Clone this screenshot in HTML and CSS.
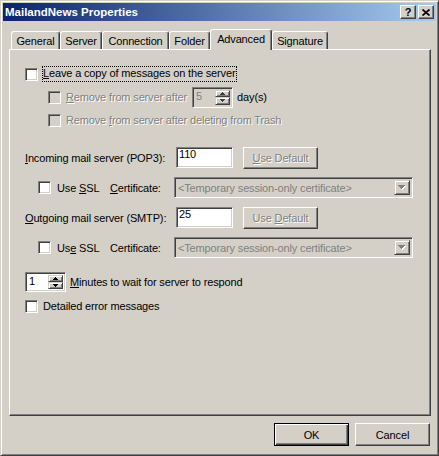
FILE: index.html
```html
<!DOCTYPE html>
<html lang="en">
<head>
    <meta charset="UTF-8">
    <title>MailandNews Properties</title>
    <link rel="stylesheet" href="styles.css">
</head>
<body>
<div class="window">
    <div class="titlebar">
        <span class="title">MailandNews Properties</span>
        <div class="caption">
            <span class="cap-btn">?</span>
            <span class="cap-btn"><svg width="8" height="7"><path d="M0.5 0.5L7.5 6.5M7.5 0.5L0.5 6.5" stroke="#000" stroke-width="1.7"/></svg></span>
        </div>
    </div>
    <div class="body">
        <div class="tabs">
            <div class="tab t-general">General</div>
            <div class="tab t-server">Server</div>
            <div class="tab t-connection">Connection</div>
            <div class="tab t-folder">Folder</div>
            <div class="tab t-advanced active">Advanced</div>
            <div class="tab t-signature">Signature</div>
        </div>
        <div class="panel">
            <div class="row r-leave">
                <span class="check"></span>
                <span class="focus"><u>L</u>eave a copy of messages on the server</span>
            </div>
            <div class="row r-sub">
                <span class="check off"></span>
                <span class="lbl dis"><u>R</u>emove from server after</span>
                <div class="spin off">
                    <span class="spin-val dis-plain">5</span>
                    <div class="spin-btns">
                        <span><svg width="5" height="3"><path d="M2 0h1v1H2zM1 1h3v1H1zM0 2h5v1H0z" fill="#404040"/></svg></span>
                        <span><svg width="5" height="3"><path d="M0 0h5v1H0zM1 1h3v1H1zM2 2h1v1H2z" fill="#404040"/></svg></span>
                    </div>
                </div>
                <span class="days">day(s)</span>
            </div>
            <div class="row r-sub2">
                <span class="check off"></span>
                <span class="lbl dis">Remove <u>f</u>rom server after deleting from Trash</span>
            </div>

            <div class="row r-server">
                <span class="w-server"><u>I</u>ncoming mail server (POP3):</span>
                <span class="field">110</span>
                <span class="btn small dis"><span><u>U</u>se Default</span></span>
            </div>
            <div class="row r-ssl">
                <span class="check"></span>
                <span class="lbl w-ssl">Use <u>S</u>SL</span>
                <span class="w-cert"><u>C</u>ertificate:</span>
                <div class="combo">
                    <span class="combo-val">&lt;Temporary session-only certificate&gt;</span>
                    <span class="combo-btn"><svg width="8" height="5"><path d="M1 1h7v1H1zM2 2h5v1H2zM3 3h3v1H3zM4 4h1v1H4z" fill="#fff"/><path d="M0 0h7v1H0zM1 1h5v1H1zM2 2h3v1H2zM3 3h1v1H3z" fill="#808080"/></svg></span>
                </div>
            </div>

            <div class="row r-server">
                <span class="w-server"><u>O</u>utgoing mail server (SMTP):</span>
                <span class="field">25</span>
                <span class="btn small dis"><span>Use <u>D</u>efault</span></span>
            </div>
            <div class="row r-ssl">
                <span class="check"></span>
                <span class="lbl w-ssl">Us<u>e</u> SSL</span>
                <span class="w-cert">Certificate:</span>
                <div class="combo">
                    <span class="combo-val">&lt;Temporary session-only certificate&gt;</span>
                    <span class="combo-btn"><svg width="8" height="5"><path d="M1 1h7v1H1zM2 2h5v1H2zM3 3h3v1H3zM4 4h1v1H4z" fill="#fff"/><path d="M0 0h7v1H0zM1 1h5v1H1zM2 2h3v1H2zM3 3h1v1H3z" fill="#808080"/></svg></span>
                </div>
            </div>

            <div class="row r-wait">
                <div class="spin">
                    <span class="spin-val">1</span>
                    <div class="spin-btns">
                        <span><svg width="5" height="3"><path d="M2 0h1v1H2zM1 1h3v1H1zM0 2h5v1H0z" fill="#000"/></svg></span>
                        <span><svg width="5" height="3"><path d="M0 0h5v1H0zM1 1h3v1H1zM2 2h1v1H2z" fill="#000"/></svg></span>
                    </div>
                </div>
                <span class="minutes"><u>M</u>inutes to wait for server to respond</span>
            </div>
            <div class="row r-detail">
                <span class="check"></span>
                <span class="lbl">Detailed error messages</span>
            </div>
        </div>
        <div class="actions">
            <span class="btn default"><span>OK</span></span>
            <span class="btn"><span>Cancel</span></span>
        </div>
    </div>
</div>
</body>
</html>
```

FILE: styles.css
```css
*{
    margin: 0;
    padding: 0;
    box-sizing: border-box;
}
body{
    font: 11px "Liberation Sans", Arial, sans-serif;
    letter-spacing: -0.15px;
    color: #000000;
    background-color: #d4d0c8;
}
.window{
    width: 439px;
    height: 456px;
    display: flex;
    flex-direction: column;
    padding: 2px;
    background-color: #d4d0c8;
    border: 1px solid;
    border-color: #d4d0c8 #404040 #404040 #d4d0c8;
    box-shadow: inset 1px 1px #ffffff, inset -1px -1px #808080;
}
.titlebar{
    height: 18px;
    display: flex;
    align-items: center;
    justify-content: space-between;
    padding: 0 2px;
    background: linear-gradient(to right, #0a246a, #a6caf0);
    color: #ffffff;
    font-weight: bold;
    letter-spacing: 0;
}
.title{
    font-size: 11.5px;
}
.caption{
    display: flex;
    gap: 2px;
}
.cap-btn{
    width: 16px;
    height: 14px;
    display: flex;
    align-items: center;
    justify-content: center;
    color: #000000;
    background-color: #d4d0c8;
    border: 1px solid;
    border-color: #ffffff #404040 #404040 #ffffff;
    box-shadow: inset -1px -1px #808080;
}
.body{
    flex: 1;
    display: flex;
    flex-direction: column;
    padding: 8px 5px 0 6px;
}
/* tabs */
.tabs{
    height: 20px;
    display: flex;
    align-items: flex-start;
    padding-left: 2px;
}
.tab{
    height: 18px;
    margin-top: 2px;
    padding-top: 1px;
    display: flex;
    align-items: center;
    justify-content: center;
    border: 1px solid;
    border-bottom: none;
    border-color: #ffffff #404040 transparent #ffffff;
    border-radius: 3px 3px 0 0;
    box-shadow: inset -1px 0 #808080;
}
.tab.active{
    height: 21px;
    margin-top: 0;
    padding: 0 0 3px;
    position: relative;
    z-index: 1;
    background-color: #d4d0c8;
}
.t-general{ width: 49px; }
.t-server{ width: 42px; }
.t-connection{ width: 67px; }
.t-folder{ width: 41px; }
.t-advanced{ width: 62px; }
.t-signature{ width: 56px; }

.panel{
    height: 367px;
    display: flex;
    flex-direction: column;
    padding: 14px 0 0 15px;
    border: 1px solid;
    border-color: #ffffff #404040 #404040 #ffffff;
    box-shadow: inset -1px -1px #808080;
}
.row{
    display: flex;
    align-items: center;
    white-space: nowrap;
}
.r-leave{ height: 20px; }
.r-sub{ height: 22px; margin-top: 2px; padding-left: 23px; }
.r-sub2{ height: 22px; margin-top: 1px; padding-left: 23px; }
.r-server{ height: 21px; margin-top: 16px; align-items: flex-start; }
.r-server + .r-ssl ~ .r-server{ margin-top: 9px; }
.r-ssl{ height: 21px; margin-top: 9px; padding-left: 13px; }
.r-wait{ height: 20px; margin-top: 14px; }
.r-detail{ height: 20px; margin-top: 4px; }

.check{
    width: 13px;
    height: 13px;
    flex: none;
    background-color: #ffffff;
    border: 1px solid;
    border-color: #808080 #ffffff #ffffff #808080;
    box-shadow: inset 1px 1px #404040, inset -1px -1px #d4d0c8;
}
.check.off{
    background-color: #d4d0c8;
}
.focus{
    margin-left: 4px;
    padding: 0 1px 1px 0;
    border: 1px dotted #000000;
    line-height: 13px;
}
.lbl{
    margin-left: 5px;
}
.dis{
    color: #808080;
    text-shadow: 1px 1px #ffffff;
}
.dis-plain{
    color: #808080;
}
.w-server{ width: 151px; padding-top: 5px; }
.w-ssl{ width: 53px; margin-left: 6px; }
.w-cert{ width: 64px; }
.r-sub .spin{ margin-left: 5px; }
.days{ margin-left: 4px; }
.minutes{ margin-left: 4px; }

.field{
    width: 57px;
    height: 21px;
    padding-left: 2px;
    line-height: 13px;
    background-color: #ffffff;
    border: 1px solid;
    border-color: #808080 #ffffff #ffffff #808080;
    box-shadow: inset 1px 1px #404040, inset -1px -1px #d4d0c8;
}
.btn{
    width: 75px;
    height: 23px;
    display: flex;
    align-items: center;
    justify-content: center;
    background-color: #d4d0c8;
    border: 1px solid;
    border-color: #ffffff #404040 #404040 #ffffff;
    box-shadow: inset -1px -1px #808080;
}
.btn.small{
    height: 22px;
    margin-left: 10px;
}
.btn.default{
    border-color: #000000;
    box-shadow: inset 1px 1px #ffffff, inset -1px -1px #404040, inset -2px -2px #808080;
}

/* spinner and combo */
.spin{
    width: 41px;
    height: 21px;
    flex: none;
    display: flex;
    padding: 2px;
    background-color: #ffffff;
    border: 1px solid;
    border-color: #808080 #ffffff #ffffff #808080;
    box-shadow: inset 1px 1px #404040, inset -1px -1px #d4d0c8;
}
.r-wait .spin{
    height: 20px;
}
.spin.off{
    background-color: #d4d0c8;
}
.spin-val{
    flex: 1;
    line-height: 12px;
    padding-left: 1px;
}
.spin-btns{
    width: 15px;
    display: flex;
    flex-direction: column;
}
.spin-btns span, .combo-btn{
    flex: 1;
    display: flex;
    align-items: center;
    justify-content: center;
    background-color: #d4d0c8;
    border: 1px solid;
    border-color: #d4d0c8 #404040 #404040 #d4d0c8;
    box-shadow: inset 1px 1px #ffffff, inset -1px -1px #808080;
}
.combo{
    width: 239px;
    height: 21px;
    display: flex;
    padding: 2px;
    background-color: #d4d0c8;
    border: 1px solid;
    border-color: #808080 #ffffff #ffffff #808080;
    box-shadow: inset 1px 1px #404040, inset -1px -1px #d4d0c8;
}
.combo-val{
    flex: 1;
    color: #808080;
    padding-left: 1px;
    line-height: 16px;
}
.combo-btn{
    flex: none;
    width: 16px;
}

.actions{
    display: flex;
    justify-content: flex-end;
    gap: 6px;
    margin-top: 7px;
    padding-right: 1px;
}
```
